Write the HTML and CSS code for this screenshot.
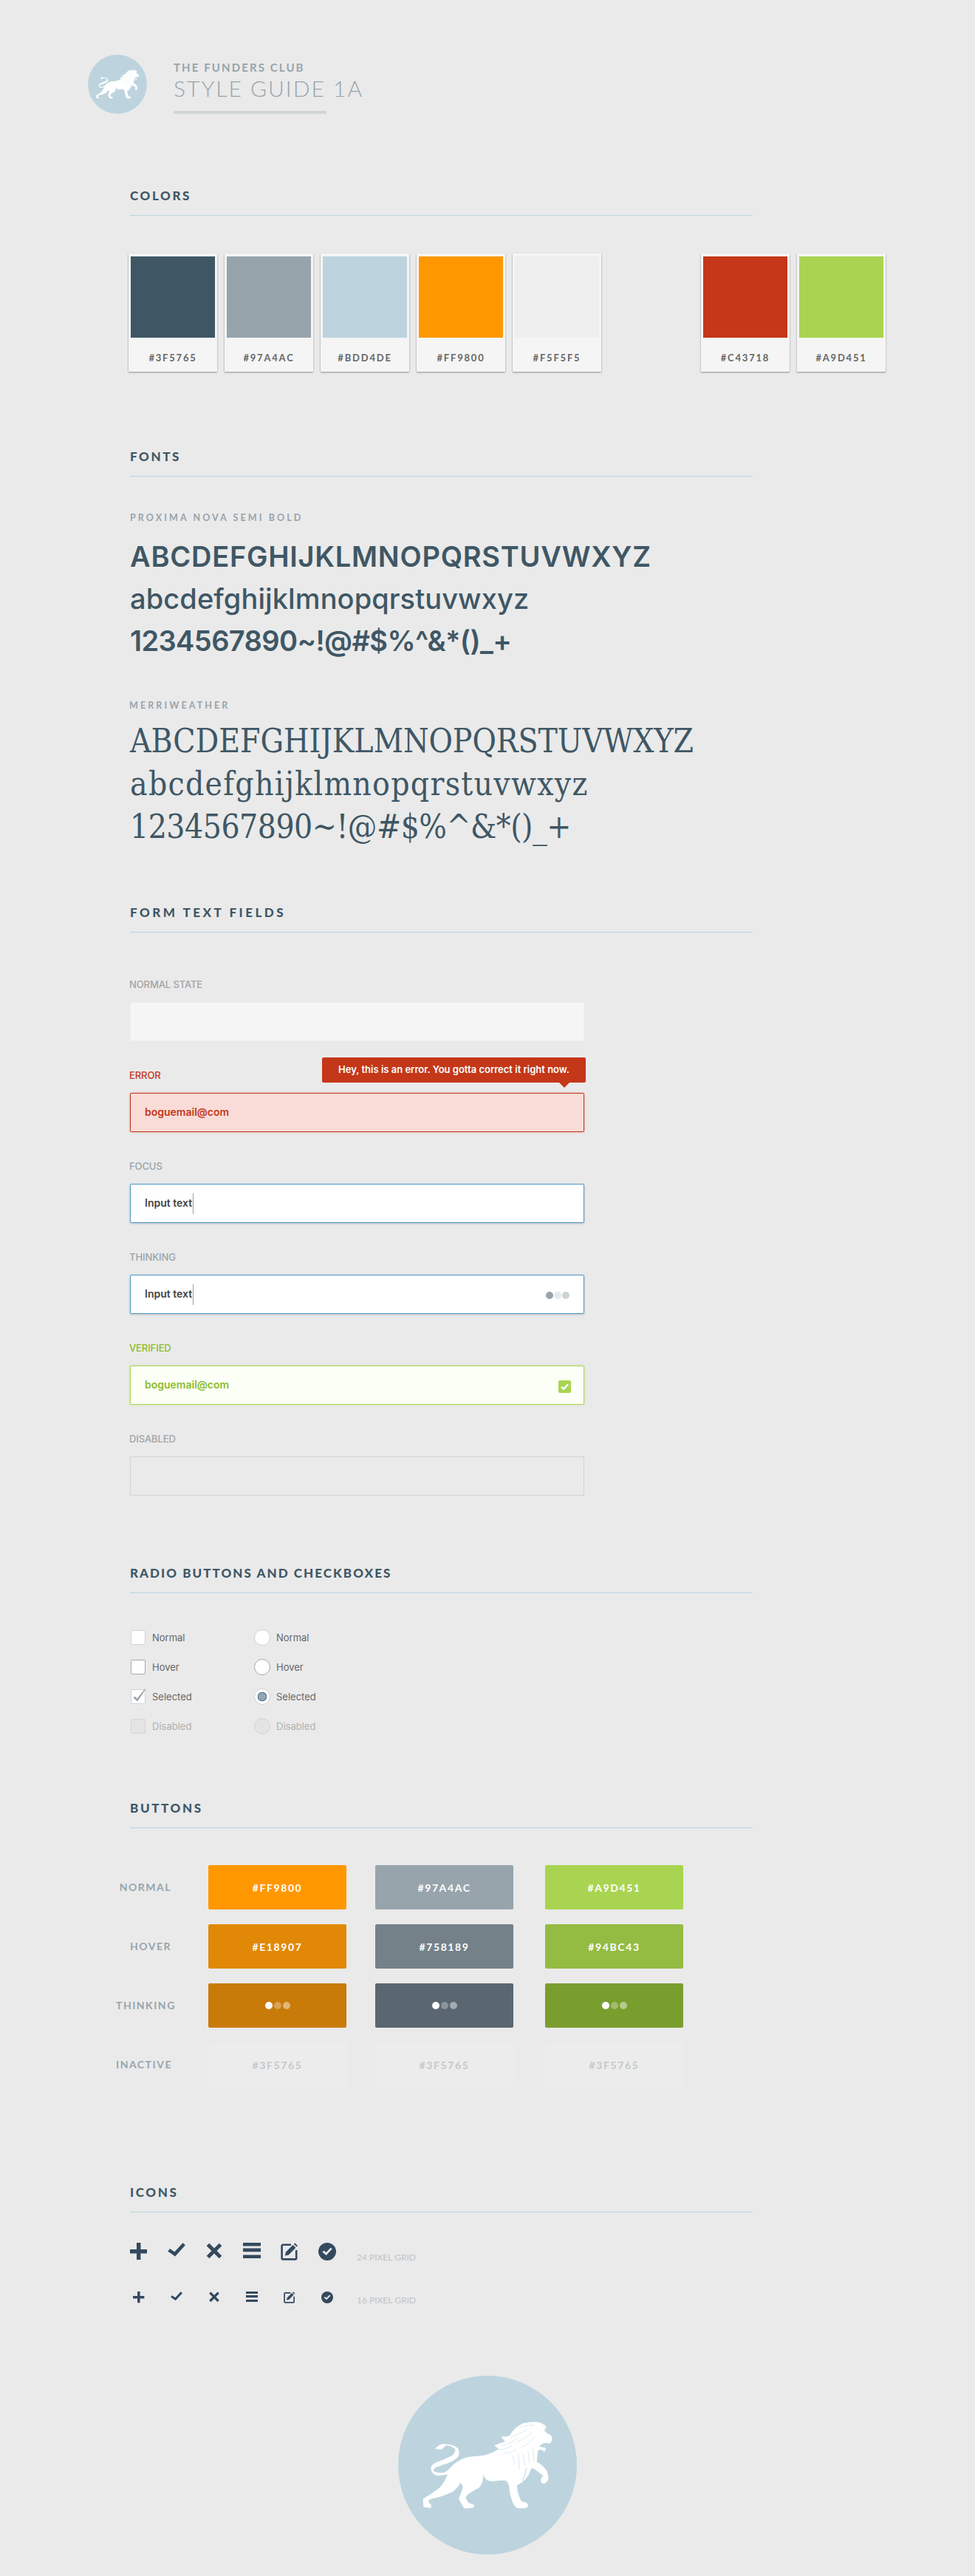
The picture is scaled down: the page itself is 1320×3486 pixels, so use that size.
FILE: index.html
```html
<!DOCTYPE html>
<html lang="en">
<head>
<meta charset="utf-8">
<title>The Funders Club Style Guide 1A</title>
<link rel="stylesheet" href="styles.css">
</head>
<body>
<svg class="defs" width="0" height="0" aria-hidden="true">
  <defs>
    <symbol id="lion" viewBox="57 75 726 726">
      <circle cx="420" cy="438" r="363" fill="#bdd4de"/>
      <g transform="translate(120 225)">
        <path fill="#fff" d="M87 147 Q95 137 108 130 Q118 124 135 128 Q165 130 180 145 Q190 165 180 180 Q165 195 135 207 Q100 217 85 225 Q78 233 85 240 Q105 247 125 243 Q140 235 150 222 Q175 195 210 183 Q225 178 250 177 Q290 175 310 166 Q325 160 345 148 L328 133 Q350 122 372 118 L355 97 Q375 100 390 92 Q410 58 445 43 Q470 36 505 38 Q520 40 528 48 L537 55 Q540 65 530 70 Q540 85 555 90 Q563 95 562 105 Q562 120 552 125 Q535 120 522 127 L510 137 L522 140 L538 143 Q537 152 530 160 Q525 150 515 150 L505 153 Q502 180 500 200 Q525 212 538 232 Q550 255 547 270 Q540 288 525 288 Q515 285 517 270 Q520 260 527 257 Q505 240 490 228 L478 225 Q470 255 445 280 L420 295 Q422 335 438 360 L458 365 Q467 372 464 380 Q458 388 445 388 L420 388 Q408 380 403 365 Q390 335 388 300 Q385 285 375 275 L350 275 Q320 280 305 277 Q290 272 282 250 Q285 285 265 305 Q240 318 225 328 Q212 338 212 347 Q220 362 225 367 L242 372 Q247 378 244 383 Q235 389 205 388 L183 350 Q195 325 200 300 L190 283 Q185 300 160 320 Q120 340 70 350 Q58 355 60 362 L72 375 L70 387 L40 383 L38 350 Q75 328 105 305 Q125 285 138 250 Q110 257 95 255 Q72 248 70 228 Q70 215 85 205 Q125 190 158 173 Q172 160 168 148 Q155 135 132 133 L112 150 Z"/>
        <g fill="none" stroke="#bdd4de" stroke-width="2" stroke-linecap="round" opacity=".75">
          <path d="M342 150 Q375 150 400 135"/>
          <path d="M360 135 Q395 125 420 105"/>
          <path d="M395 100 Q430 85 460 70"/>
          <path d="M420 120 Q455 105 480 80"/>
          <path d="M440 140 Q470 125 490 100"/>
          <path d="M370 165 Q395 165 415 150"/>
          <path d="M400 175 L412 205"/>
          <path d="M425 165 L430 232"/>
          <path d="M445 170 L452 215"/>
          <path d="M465 160 L470 205"/>
          <path d="M485 145 L488 200"/>
          <path d="M430 60 Q460 50 490 50"/>
        </g>
        <path fill="none" stroke="#bdd4de" stroke-width="3" d="M458 225 Q452 255 442 280"/>
      </g>
    </symbol>
    <symbol id="i-plus" viewBox="0 0 24 24"><path d="M9 0h5.4v9H23v5.4h-8.6V23H9v-8.6H0V9h9z"/></symbol>
    <symbol id="i-check" viewBox="0 0 24 24"><path fill="none" stroke="currentColor" stroke-width="4.6" d="M1.6 9.8l8.2 5.6L22.2 1.8"/></symbol>
    <symbol id="i-x" viewBox="0 0 24 24"><path fill="none" stroke="currentColor" stroke-width="5" d="M3.5 2.5l17 17M20.5 2.5l-17 17"/></symbol>
    <symbol id="i-menu" viewBox="0 0 24 24"><path d="M0 0h24v4.6H0zM0 7.6h24v4.6H0zM0 16.4h24V21H0z"/></symbol>
    <symbol id="i-edit" viewBox="0 0 24 24"><path fill="none" stroke="currentColor" stroke-width="2.6" d="M14 2.8H3.2A1.6 1.6 0 0 0 1.6 4.4v16.4a1.6 1.6 0 0 0 1.6 1.6h16.4a1.6 1.6 0 0 0 1.6-1.6V10"/><path d="M5.8 17.6l1.2-5L16.6 3l3.8 3.8-9.6 9.6zM17.8 1.8L19.4 0.4 23 4 21.6 5.6z"/></symbol>
    <symbol id="i-ok" viewBox="0 0 24 24"><circle cx="12" cy="12" r="12"/><path fill="none" stroke="#eaeaea" stroke-width="2.8" d="M6.4 11.6l4.2 3.4 7-7.4"/></symbol>
  </defs>
</svg>

<header class="masthead">
  <svg class="logo-small"><use href="#lion"/></svg>
  <div class="brand">
    <div class="brand-name">THE FUNDERS CLUB</div>
    <div class="brand-title">STYLE GUIDE 1A</div>
    <div class="brand-rule"></div>
  </div>
</header>

<main class="guide">
  <section class="sec sec-colors">
    <h2>COLORS</h2>
    <div class="swatches">
      <div class="swatch"><div class="chip c-dark"></div><div class="hex">#3F5765</div></div>
      <div class="swatch"><div class="chip c-gray"></div><div class="hex">#97A4AC</div></div>
      <div class="swatch"><div class="chip c-blue"></div><div class="hex">#BDD4DE</div></div>
      <div class="swatch"><div class="chip c-orange"></div><div class="hex">#FF9800</div></div>
      <div class="swatch"><div class="chip c-light"></div><div class="hex">#F5F5F5</div></div>
      <div class="swatch swatch-apart"><div class="chip c-red"></div><div class="hex">#C43718</div></div>
      <div class="swatch"><div class="chip c-green"></div><div class="hex">#A9D451</div></div>
    </div>
  </section>

  <section class="sec sec-fonts">
    <h2>FONTS</h2>
    <div class="font-label">PROXIMA NOVA SEMI BOLD</div>
    <div class="sans">
      <div class="sans-upper">ABCDEFGHIJKLMNOPQRSTUVWXYZ</div>
      <div class="sans-lower">abcdefghijklmnopqrstuvwxyz</div>
      <div class="sans-num">1234567890~!@#$%^&amp;*()_+</div>
    </div>
    <div class="font-label font-label-2">MERRIWEATHER</div>
    <div class="serif">
      <div class="serif-upper">ABCDEFGHIJKLMNOPQRSTUVWXYZ</div>
      <div class="serif-lower">abcdefghijklmnopqrstuvwxyz</div>
      <div class="serif-num">1234567890~!@#$%^&amp;*()_+</div>
    </div>
  </section>

  <section class="sec sec-form">
    <h2>FORM TEXT FIELDS</h2>
    <div class="field">
      <div class="label label-normal">NORMAL STATE</div>
      <div class="input in-normal"></div>
    </div>
    <div class="field">
      <div class="label label-error">ERROR</div>
      <div class="input in-error">boguemail@com</div>
      <div class="tooltip">Hey, this is an error. You gotta correct it right now.</div>
    </div>
    <div class="field">
      <div class="label label-info">FOCUS</div>
      <div class="input in-focus">Input text<span class="caret"></span></div>
    </div>
    <div class="field">
      <div class="label label-info">THINKING</div>
      <div class="input in-focus">Input text<span class="caret"></span>
        <span class="dots dots-input"><i class="d1"></i><i class="d2"></i><i class="d3"></i></span>
      </div>
    </div>
    <div class="field">
      <div class="label label-ok">VERIFIED</div>
      <div class="input in-ok">boguemail@com
        <span class="okbox"><svg viewBox="0 0 17 17" width="17" height="17"><path fill="none" stroke="#fff" stroke-width="2.4" d="M4 8.6l3.2 3L13 5.4"/></svg></span>
      </div>
    </div>
    <div class="field">
      <div class="label label-normal">DISABLED</div>
      <div class="input in-disabled"></div>
    </div>
  </section>

  <section class="sec sec-choice">
    <h2>RADIO BUTTONS AND CHECKBOXES</h2>
    <div class="choices">
      <div class="choice"><span class="box"></span>Normal</div>
      <div class="choice"><span class="radio"></span>Normal</div>
      <div class="choice"><span class="box hover"></span>Hover</div>
      <div class="choice"><span class="radio hover"></span>Hover</div>
      <div class="choice"><span class="box"><svg class="tick" viewBox="0 0 20 20" width="20" height="20"><path fill="#97a4ac" d="M2.5 11.5l2-2 3 3.2L18 -0.5l1 .8L8 16.5z"/></svg></span>Selected</div>
      <div class="choice"><span class="radio selected"></span>Selected</div>
      <div class="choice choice-off"><span class="box off"></span>Disabled</div>
      <div class="choice choice-off"><span class="radio off"></span>Disabled</div>
    </div>
  </section>

  <section class="sec sec-buttons">
    <h2>BUTTONS</h2>
    <div class="btn-grid">
      <div class="btn-label">NORMAL</div>
      <div class="btn b-o1">#FF9800</div><div class="btn b-g1">#97A4AC</div><div class="btn b-l1">#A9D451</div>
      <div class="btn-label">HOVER</div>
      <div class="btn b-o2">#E18907</div><div class="btn b-g2">#758189</div><div class="btn b-l2">#94BC43</div>
      <div class="btn-label">THINKING</div>
      <div class="btn b-o3"><span class="dots"><i class="w"></i><i class="w2"></i><i class="w3"></i></span></div>
      <div class="btn b-g3"><span class="dots"><i class="w"></i><i class="w2"></i><i class="w3"></i></span></div>
      <div class="btn b-l3"><span class="dots"><i class="w"></i><i class="w2"></i><i class="w3"></i></span></div>
      <div class="btn-label">INACTIVE</div>
      <div class="btn b-off">#3F5765</div><div class="btn b-off">#3F5765</div><div class="btn b-off">#3F5765</div>
    </div>
  </section>

  <section class="sec sec-icons">
    <h2>ICONS</h2>
    <div class="icon-row">
      <div class="icons icons-24">
        <svg><use href="#i-plus"/></svg><svg><use href="#i-check"/></svg><svg><use href="#i-x"/></svg><svg><use href="#i-menu"/></svg><svg><use href="#i-edit"/></svg><svg><use href="#i-ok"/></svg>
      </div>
      <div class="grid-note note-24">24 PIXEL GRID</div>
    </div>
    <div class="icon-row icon-row-16">
      <div class="icons icons-16">
        <svg><use href="#i-plus"/></svg><svg><use href="#i-check"/></svg><svg><use href="#i-x"/></svg><svg><use href="#i-menu"/></svg><svg><use href="#i-edit"/></svg><svg><use href="#i-ok"/></svg>
      </div>
      <div class="grid-note note-16">16 PIXEL GRID</div>
    </div>
  </section>
</main>

<footer class="foot">
  <svg class="logo-big"><use href="#lion"/></svg>
</footer>
</body>
</html>
```
FILE: styles.css
```css
* { box-sizing: border-box; }
html, body { margin: 0; padding: 0; background: #eaeaea; }
body { font-family: "Lato", "Liberation Sans", sans-serif; color: #3f5765; width: 1320px; height: 3486px; overflow: hidden; }
.defs { position: absolute; }

.masthead { display: flex; padding: 74px 0 0 119px; }
.logo-small { width: 80px; height: 80px; flex: none; }
.brand { margin-left: 36px; }
.brand-name { font-size: 15px; line-height: 18px; font-weight: 700; letter-spacing: 2.1px; color: #97a4ac; margin-top: 8px; }
.brand-title { font-size: 30px; line-height: 36px; font-weight: 300; letter-spacing: 2px; color: #97a4ac; margin-top: 1px; white-space: nowrap; }
.brand-rule { width: 207px; height: 4px; background: #d0d5d8; margin-top: 13px; }

.guide { margin-left: 176px; width: 843px; }
.sec h2 { margin: 0; height: 37px; padding-bottom: 16px; font-size: 17px; line-height: 20px; font-weight: 900; letter-spacing: 2.6px; color: #3f5765; border-bottom: 1px solid #bdd4de; }

.sec-colors { margin-top: 101px; }
.swatches { display: flex; gap: 10px; margin: 51px 0 0 -2px; }
.swatch { flex: none; width: 120px; height: 160px; background: #f5f5f5; padding: 4px 3px 0; box-shadow: 0 1px 2px rgba(0,0,0,.4); }
.swatch-apart { margin-left: 125px; }
.chip { height: 110px; }
.c-dark { background: #3f5765; }
.c-gray { background: #97a4ac; }
.c-blue { background: #bdd4de; }
.c-orange { background: #ff9800; }
.c-light { background: #efefef; }
.c-red { background: #c43718; }
.c-green { background: #a9d451; }
.hex { text-align: center; font-size: 13px; line-height: 16px; font-weight: 700; letter-spacing: 1.8px; color: #666; margin-top: 19px; }

.sec-fonts { margin-top: 105px; }
.font-label { font-size: 12.5px; line-height: 16px; font-weight: 700; letter-spacing: 3.1px; color: #97a4ac; margin-top: 48px; }
.font-label-2 { margin-top: 51px; margin-left: -1px; }
.sans { margin-top: 16px; font-family: "Inter", sans-serif; font-weight: 600; white-space: nowrap; }
.sans-upper, .sans-lower, .sans-num { height: 57px; line-height: 57px; font-size: 38px; }
.sans-upper { letter-spacing: .75px; }
.sans-lower { font-weight: 500; letter-spacing: .1px; }
.sans-num { letter-spacing: -.6px; }
.serif { margin-top: 11px; font-family: "DejaVu Serif", serif; font-stretch: condensed; white-space: nowrap; }
.serif-upper, .serif-lower, .serif-num { height: 58px; line-height: 58px; font-size: 44px; }
.serif-upper { letter-spacing: -.08px; }
.serif-lower { letter-spacing: 1.3px; }
.serif-num { letter-spacing: -.5px; }

.sec-form { margin-top: 77px; }
.sec-form h2 { margin-bottom: 62px; letter-spacing: 3.5px; }
.field { position: relative; margin-bottom: 38px; }
.label { font-family: "Inter", sans-serif; font-size: 13px; line-height: 16px; font-weight: 500; letter-spacing: -.1px; margin-bottom: 16px; margin-left: -1px; }
.label-normal { color: #a4a4a4; }
.label-error { color: #c43718; }
.label-info { color: #97a4ac; }
.label-ok { color: #8cbc2c; }
.input { position: relative; width: 615px; height: 53px; padding: 0 19px; font-family: "Inter", sans-serif; font-size: 14px; line-height: 50px; font-weight: 600; border: 1px solid #eeeeee; border-radius: 2px; }
.in-normal { background: #f5f5f5; }
.in-error { background: #f9dcd8; border-color: #c43718; color: #c43718; box-shadow: 0 0 3px rgba(196,55,24,.4); }
.in-focus { background: #fff; border-color: #4f97c5; color: #444; box-shadow: 0 1px 3px rgba(63,87,101,.3); }
.in-ok { background: #fcfff6; border-color: #a9d451; color: #8cbc2c; box-shadow: 0 0 3px rgba(169,212,81,.5); }
.in-disabled { background: transparent; border-color: #d2d2d2; }
.caret { display: inline-block; width: 1px; height: 28px; background: #a0a0a0; vertical-align: middle; margin-left: 1px; }
.tooltip { position: absolute; left: 260px; top: -16px; width: 357px; height: 34px; background: #c43718; color: #fff; border-radius: 2px; font-family: "Inter", sans-serif; font-size: 13px; line-height: 32px; font-weight: 600; text-align: center; }
.tooltip::after { content: ""; position: absolute; left: 321px; top: 34px; border: 7px solid transparent; border-top-color: #c43718; border-bottom-width: 0; }
.dots { display: inline-flex; gap: 1px; }
.dots i { display: block; width: 10px; height: 10px; border-radius: 50%; }
.dots-input { position: absolute; right: 19px; top: 22px; }
.d1 { background: #97a4ac; }
.d2 { background: #e6e9eb; }
.d3 { background: #cdd4d8; }
.okbox { position: absolute; right: 17px; top: 19px; width: 17px; height: 17px; border-radius: 2px; background: #a9d451; }
.okbox svg { display: block; }

.sec-choice { margin-top: 95px; }
.sec-choice h2 { letter-spacing: 2.05px; }
.choices { display: grid; grid-template-columns: 168px 168px; grid-auto-rows: 40px; margin-top: 40px; }
.choice { display: flex; align-items: center; font-family: "Inter", sans-serif; font-size: 13px; font-weight: 400; color: #666; }
.choice-off { color: #b0b0b0; }
.box { position: relative; flex: none; width: 20px; height: 20px; margin: 0 9px 0 1px; background: #fff; border: 1px solid #d2d2d2; border-radius: 2px; }
.box.hover { border-color: #a8a8a8; }
.box.off { background: #e4e4e4; border-color: #d4d4d4; }
.tick { position: absolute; left: 0; top: -1px; overflow: visible; }
.radio { flex: none; width: 22px; height: 22px; margin-right: 8px; background: #fff; border: 1px solid #d2d2d2; border-radius: 50%; }
.radio.hover { border-color: #a8a8a8; }
.radio.selected { background: radial-gradient(circle, #97a4ac 0 5px, #4f7e9c 5.2px 6.2px, #fff 6.6px); }
.radio.off { background: #e4e4e4; border-color: #d4d4d4; }

.sec-buttons { margin-top: 81px; }
.btn-grid { display: grid; grid-template-columns: 125px 226px 230px 187px; grid-auto-rows: 60px; row-gap: 20px; margin: 50px 0 0 -19px; }
.btn-label { padding-right: 50px; text-align: right; line-height: 60px; font-size: 14px; font-weight: 700; letter-spacing: 1.5px; color: #97a4ac; }
.btn { display: flex; align-items: center; justify-content: center; width: 187px; height: 60px; border-radius: 2px; color: #fff; font-size: 14px; font-weight: 700; letter-spacing: 1.6px; }
.btn .dots { gap: 2px; }
.b-o1 { background: #ff9800; }
.b-g1 { background: #97a4ac; }
.b-l1 { background: #a9d451; }
.b-o2 { background: #e18907; }
.b-g2 { background: #758189; }
.b-l2 { background: #94bc43; }
.b-o3 { background: #c97b09; }
.b-g3 { background: #5a6670; }
.b-l3 { background: #7a9e2e; }
.b-off { background: #ececec; color: #c4c8cb; }
.dots .w { background: #fff; }
.dots .w2 { background: rgba(255,255,255,.3); }
.dots .w3 { background: rgba(255,255,255,.45); }

.sec-icons { margin-top: 133px; }
.icon-row { display: flex; margin-top: 41px; }
.icon-row-16 { margin-top: 38px; }
.icons { display: grid; grid-template-columns: repeat(6, 24px); column-gap: 27px; color: #34495e; fill: #34495e; }
.icons svg { display: block; }
.icons-24 svg { width: 24px; height: 24px; }
.icons-16 svg { width: 16px; height: 16px; margin-left: 4px; }
.grid-note { margin-left: 28px; font-size: 12px; line-height: 16px; font-weight: 400; color: #c0c4c8; white-space: nowrap; }
.note-24 { margin-top: 12px; }
.note-16 { margin-top: 4px; }

.foot { display: flex; justify-content: center; margin-top: 94px; }
.logo-big { width: 242px; height: 242px; }
```
